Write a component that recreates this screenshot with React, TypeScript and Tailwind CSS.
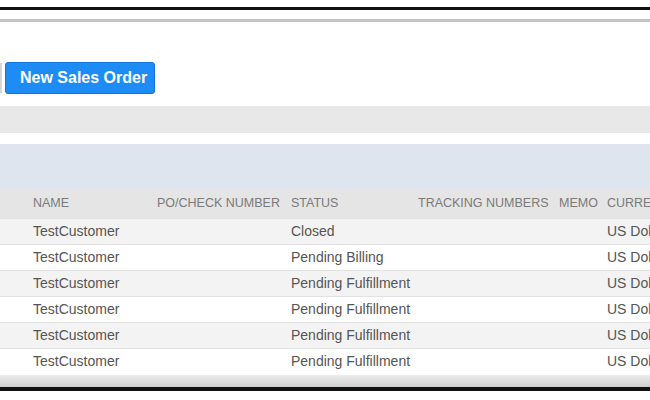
import React from 'react';

const rows = [
    { name: 'TestCustomer', status: 'Closed', currency: 'US Dollar' },
    { name: 'TestCustomer', status: 'Pending Billing', currency: 'US Dollar' },
    { name: 'TestCustomer', status: 'Pending Fulfillment', currency: 'US Dollar' },
    { name: 'TestCustomer', status: 'Pending Fulfillment', currency: 'US Dollar' },
    { name: 'TestCustomer', status: 'Pending Fulfillment', currency: 'US Dollar' },
    { name: 'TestCustomer', status: 'Pending Fulfillment', currency: 'US Dollar' },
];

const App: React.FC = () => {
    return (
        <div className="w-[650px] h-[400px] bg-white overflow-hidden font-['Liberation_Sans',Arial,sans-serif] pt-[7px]">
            {/* Window frame top */}
            <div className="h-[3px] bg-[#111]"></div>
            <div className="mt-[9px] h-[3px] bg-[#c4c4c4]"></div>

            {/* Toolbar */}
            <div className="mt-[40px] flex items-center h-[32px]">
                <div className="w-[2px] h-[30px] bg-[#d6d6d6]"></div>
                <button className="ml-[3px] w-[150px] h-[32px] rounded-[3px] bg-[#1e8cf7] border border-[#1474dc] text-white font-bold text-[16px] text-left pl-[14px]">
                    New Sales Order
                </button>
            </div>

            {/* Filter band */}
            <div className="mt-[12px] h-[27px] bg-[#e8e8e8]"></div>
            <div className="mt-[11px] h-[45px] bg-[#dfe5ee]"></div>

            {/* Table header */}
            <div className="flex items-center h-[29px] bg-[#e5e5e5] pl-[33px] text-[12.5px] text-[#7a7a7a] uppercase whitespace-nowrap overflow-hidden">
                <div className="w-[124px] shrink-0">Name</div>
                <div className="w-[134px] shrink-0">PO/Check Number</div>
                <div className="w-[127px] shrink-0">Status</div>
                <div className="w-[141px] shrink-0">Tracking Numbers</div>
                <div className="w-[48px] shrink-0">Memo</div>
                <div className="shrink-0">Currency</div>
            </div>

            {/* Rows */}
            {rows.map((row, i) => (
                <div
                    key={i}
                    className={`flex items-center h-[26px] border-t border-[#e2e2e2] pl-[33px] text-[14px] text-[#555] whitespace-nowrap overflow-hidden ${i % 2 === 0 ? 'bg-[#f3f3f3]' : 'bg-white'}`}
                >
                    <div className="w-[124px] shrink-0">{row.name}</div>
                    <div className="w-[134px] shrink-0"></div>
                    <div className="w-[127px] shrink-0">{row.status}</div>
                    <div className="w-[141px] shrink-0"></div>
                    <div className="w-[48px] shrink-0"></div>
                    <div className="shrink-0">{row.currency}</div>
                </div>
            ))}

            {/* Window frame bottom */}
            <div className="mt-[1px] h-[12px] bg-gradient-to-b from-[#ececec] to-[#cfcfcf]"></div>
            <div className="h-[4px] bg-[#111]"></div>
        </div>
    );
};

export default App;
